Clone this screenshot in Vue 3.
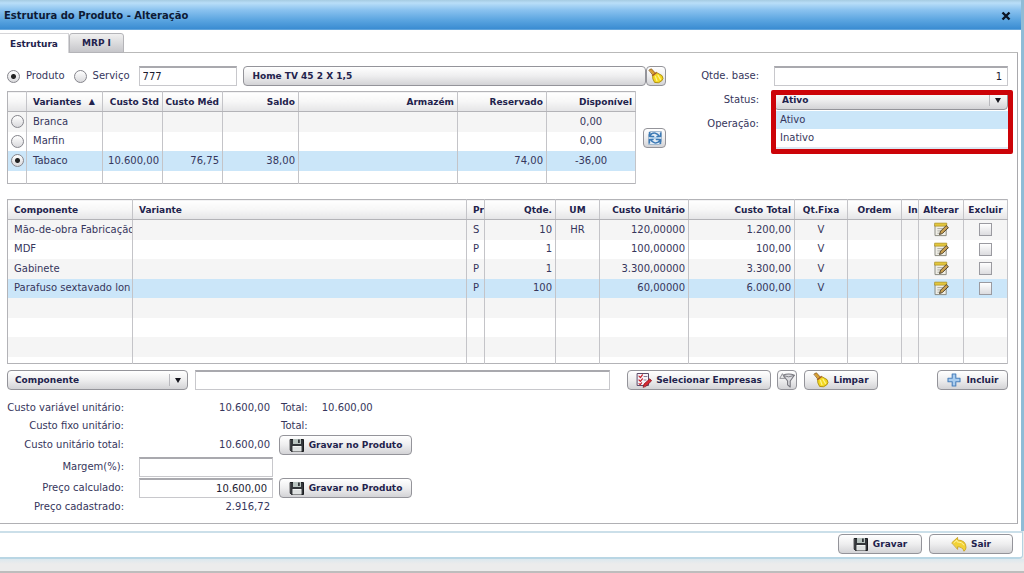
<script setup>
import { ref, h } from 'vue'

const kind = ref('produto')
const code = ref('777')
const baseQty = ref('1')
const status = ref('Ativo')
const variant = ref('Tabaco')
const search = ref('')
const margin = ref('')
const price = ref('10.600,00')

const variants = [
  { name: 'Branca', std: '', med: '', saldo: '', res: '', disp: '0,00' },
  { name: 'Marfin', std: '', med: '', saldo: '', res: '', disp: '0,00' },
  { name: 'Tabaco', std: '10.600,00', med: '76,75', saldo: '38,00', res: '74,00', disp: '-36,00' },
]
const components = [
  { name: 'Mão-de-obra Fabricação', p: 'S', qty: '10', um: 'HR', unit: '120,00000', total: '1.200,00' },
  { name: 'MDF', p: 'P', qty: '1', um: '', unit: '100,00000', total: '100,00' },
  { name: 'Gabinete', p: 'P', qty: '1', um: '', unit: '3.300,00000', total: '3.300,00' },
  { name: 'Parafuso sextavado lon', p: 'P', qty: '100', um: '', unit: '60,00000', total: '6.000,00', selected: true },
]

const svg = (kids) => h('svg', { viewBox: '0 0 16 16', width: 16, height: 16, 'aria-hidden': 'true' },
  kids.map(([d, fill, stroke, w]) => h('path', { d, fill: fill || 'none', stroke: stroke || 'none', 'stroke-width': w || 1, 'stroke-linejoin': 'round', 'stroke-linecap': 'round' })))

const Broom = () => svg([
  ['M1.2 2 3.4 .8 7.6 5.4 5.4 7.2Z', '#d9a030', '#8a5a18', 0.8],
  ['M4.6 7.2 8.4 4.4 14 7.6Q16.2 10.6 13.6 13 10.6 15.8 6.6 14.4Q4 11 4.6 7.2Z', '#f4d820', '#a98a0c', 0.9],
  ['M7.4 8.4 9 12.8M10 7.2 12.4 11.4', null, '#fff48a', 1.2],
  ['M4.8 7.4 8.4 4.8', null, '#a8552d', 1.2],
])
const Floppy = () => svg([
  ['M1.5 2.5H14.5V14.5H2.5L1.5 13.5Z', '#33363a', '#1b1d20', 1],
  ['M4 2H12V7H4Z', '#b9c4c0'],
  ['M9 2.5H10.8V6H9Z', '#33363a'],
  ['M3.5 9H12.5V14.5H3.5Z', '#f4f6f5'],
  ['M4.5 11H11.5M4.5 13H11.5', null, '#bcc2c2', 0.8],
])
const Undo = () => svg([
  ['M1 6.6 6.6 1.4V4Q15 4.2 15 11.4 15 13.6 13 15.2 11.6 10.8 6.6 10.8V13Z', '#f2d235', '#c9a423', 0.9],
  ['M3 6.6 6 4V5.8Q11 5.8 13 9', null, '#fff2a0', 1],
])
const Plus = () => svg([
  ['M6.2 2H9.8V6.2H14V9.8H9.8V14H6.2V9.8H2V6.2H6.2Z', '#a9cdf0', '#4a80bc', 1.1],
])
const Funnel = () => svg([
  ['M4 3.2Q9.6 .8 15.4 3.2L11.2 9V15L8.6 12.8V9Z', '#dcdce0', '#77777e', 1.1],
  ['M4.2 3.6Q9.6 6.2 15 3.6', null, '#77777e', 0.9],
  ['M3.2 2 .8 6.4H5.4Z', '#eeeeee', '#88888e', 0.9],
])
const Check = () => svg([
  ['M1.5 1.5H12.5V13.5H1.5Z', '#f6f3f8', '#5a4a68', 1],
  ['M3 4.2 4.4 5.6 6.4 2.8M3 8 4.4 9.4 6.4 6.8M3 11.6 4.2 12.6 5.6 10.8', null, '#c8202c', 1.2],
  ['M8 4.5H11M8 8H10', null, '#8b7d96', 1],
  ['M7.2 15 8 12 13.8 6.8 15.6 8.8 10 14.2Z', '#d52a34', '#8e1620', 0.8],
])
const Refresh = () => svg([
  ['M3.5 1.5H14.5V11.5H12.5V14.5H1.5V4.5H3.5Z', '#e6eef6', '#9db4cc', 0.9],
  ['M2.5 2.4V6.4H6.6M3 6Q4.6 2.6 8.4 3.2 11 3.8 12.4 6.4M10 6.6H13.6V3', null, '#3d7ab5', 1.5],
  ['M13.5 13.6V9.6H9.4M13 10Q11.4 13.4 7.6 12.8 5 12.2 3.6 9.6M6 9.4H2.4V13', null, '#3d7ab5', 1.5],
  ['M5 8H11', null, '#7fb2de', 1.2],
])
const Note = () => svg([
  ['M1.5 2.5H13V14.5H1.5Z', '#efeee6', '#85857c', 1],
  ['M1 1.2H13.6V4.4H1Z', '#e2c63e', '#a98d1c', 0.7],
  ['M4 7H9M4 9.5H7M4 12H6', null, '#a4a49e', 0.9],
  ['M6 13 7 9.8 13 3.8 15.4 6 9.2 12Z', '#c9a050', '#4c3f28', 1],
])
</script>

<template>
  <main class="page">
    <section class="window">
      <header class="title">
        <h1>Estrutura do Produto - Alteração</h1>
        <button class="close" type="button" aria-label="Fechar">
          <svg viewBox="0 0 10 10" width="10" height="10" aria-hidden="true"><path d="M1.5 1.5 8.5 8.5M8.5 1.5 1.5 8.5" stroke="#0b1524" stroke-width="2.4" /></svg>
        </button>
      </header>
      <nav class="tabs" role="tablist">
        <button class="tab active" type="button" role="tab" aria-selected="true">Estrutura</button>
        <button class="tab" type="button" role="tab" aria-selected="false">MRP I</button>
      </nav>

      <div class="panel">
        <div class="top">
          <div>
            <div class="product">
              <label class="radio"><input v-model="kind" type="radio" name="kind" value="produto" />Produto</label>
              <label class="radio"><input v-model="kind" type="radio" name="kind" value="servico" />Serviço</label>
              <input v-model="code" class="field code" type="text" aria-label="Código" />
              <button class="btn name" type="button">Home TV 45 2 X 1,5</button>
              <button class="btn square" type="button" aria-label="Limpar produto"><Broom /></button>
            </div>
            <div class="variants">
              <table class="grid">
                <colgroup><col class="w19" /><col class="w76" /><col class="w60" /><col class="w60" /><col class="w76" /><col /><col class="w89" /><col class="w89" /></colgroup>
                <thead>
                  <tr><th></th><th>Variantes <span class="sort">▲</span></th><th class="r">Custo Std</th><th class="r">Custo Méd</th><th class="r">Saldo</th><th class="r">Armazém</th><th class="r">Reservado</th><th class="r">Disponível</th></tr>
                </thead>
                <tbody>
                  <tr v-for="v in variants" :key="v.name" :class="{ selected: variant === v.name }">
                    <td class="tick"><input v-model="variant" type="radio" name="variant" :value="v.name" :aria-label="v.name" /></td>
                    <td>{{ v.name }}</td><td class="r">{{ v.std }}</td><td class="r">{{ v.med }}</td><td class="r">{{ v.saldo }}</td><td></td><td class="r">{{ v.res }}</td><td class="c">{{ v.disp }}</td>
                  </tr>
                  <tr class="rest"><td v-for="n in 8" :key="n"></td></tr>
                </tbody>
              </table>
              <button class="btn square" type="button" aria-label="Atualizar"><Refresh /></button>
            </div>
          </div>

          <div class="settings">
            <label for="base">Qtde. base:</label>
            <input id="base" v-model="baseQty" class="field r" type="text" />
            <label for="status">Status:</label>
            <div class="combo">
              <div class="drop">
                <select id="status" v-model="status"><option>Ativo</option><option>Inativo</option></select>
              </div>
              <ul class="menu" role="listbox" aria-label="Status">
                <li role="option" aria-selected="true">Ativo</li>
                <li role="option" aria-selected="false">Inativo</li>
              </ul>
              <div class="highlight"></div>
            </div>
            <span class="label">Operação:</span>
          </div>
        </div>

        <table class="grid parts">
          <colgroup><col class="w125" /><col /><col class="w18" /><col class="w71" /><col class="w44" /><col class="w89" /><col class="w106" /><col class="w53" /><col class="w54" /><col class="w17" /><col class="w45" /><col class="w44" /></colgroup>
          <thead>
            <tr><th>Componente</th><th>Variante</th><th>Pr</th><th class="r">Qtde.</th><th class="c">UM</th><th class="r">Custo Unitário</th><th class="r">Custo Total</th><th class="c">Qt.Fixa</th><th class="c">Ordem</th><th>In</th><th class="tick">Alterar</th><th class="tick">Excluir</th></tr>
          </thead>
          <tbody>
            <tr v-for="c in components" :key="c.name" :class="{ selected: c.selected }">
              <td>{{ c.name }}</td><td></td><td>{{ c.p }}</td><td class="r">{{ c.qty }}</td><td class="c">{{ c.um }}</td><td class="r">{{ c.unit }}</td><td class="r">{{ c.total }}</td><td class="c">V</td><td></td><td></td>
              <td class="tick"><button class="icon" type="button" :aria-label="'Alterar ' + c.name"><Note /></button></td>
              <td class="tick"><input type="checkbox" :aria-label="'Excluir ' + c.name" /></td>
            </tr>
            <tr v-for="n in 3" :key="n"><td v-for="m in 12" :key="m"></td></tr>
            <tr class="rest"><td v-for="m in 12" :key="m"></td></tr>
          </tbody>
        </table>

        <div class="tools">
          <div class="drop kind"><select aria-label="Tipo"><option>Componente</option></select></div>
          <input v-model="search" class="field search" type="text" aria-label="Pesquisar" />
          <button class="btn companies" type="button"><Check />Selecionar Empresas</button>
          <button class="btn square" type="button" aria-label="Filtrar"><Funnel /></button>
          <button class="btn clear" type="button"><Broom />Limpar</button>
          <button class="btn add" type="button"><Plus />Incluir</button>
        </div>

        <div class="totals">
          <span class="label">Custo variável unitário:</span><span class="value">10.600,00</span><span class="extra">Total:<span>10.600,00</span></span>
          <span class="label">Custo fixo unitário:</span><span></span><span class="extra">Total:</span>
          <span class="label">Custo unitário total:</span><span class="value">10.600,00</span><button class="btn save" type="button"><Floppy />Gravar no Produto</button>
          <label for="margin">Margem(%):</label><input id="margin" v-model="margin" class="field r" type="text" /><span></span>
          <label for="price">Preço calculado:</label><input id="price" v-model="price" class="field r" type="text" /><button class="btn save" type="button"><Floppy />Gravar no Produto</button>
          <span class="label">Preço cadastrado:</span><span class="value">2.916,72</span><span></span>
        </div>
      </div>
    </section>
    <footer class="actions">
      <button class="btn" type="button"><Floppy />Gravar</button>
      <button class="btn" type="button"><Undo />Sair</button>
    </footer>
    <div class="base"></div>
  </main>
</template>

<style>
body { margin: 0; background: #ececec; }
</style>

<style scoped>
.page, .page * { box-sizing: border-box; }
.page {
  display: flex; flex-direction: column; min-height: 100vh;
  font: 10px/14px "DejaVu Sans", Verdana, sans-serif; color: #36365c; background: #ececec;
}
button, input, select { font: inherit; color: inherit; margin: 0; }
.window { background: #fff; border-right: 3px solid #8fbcd6; padding-bottom: 7px; }
.title {
  display: flex; align-items: center; justify-content: space-between;
  height: 30px; padding: 2px 10px 0 4px;
  background: linear-gradient(#a5cbe2 0, #b9def8 3px, #8ac2ef 10px, #5ba5e0 20px, #3a8cd2 29px, #8abce3 30px);
}
h1 { margin: 0; font-size: 10px; font-weight: bold; color: #0d1a35; }
.close { display: flex; padding: 0; border: 0; background: none; }
.tabs { display: flex; height: 23px; padding-top: 3px; border-bottom: 1px solid #b9b9b9; margin-right: 3px; }
.tab {
  height: 20px; padding: 0 12px; border: 1px solid #b4b4b8; border-radius: 3px 3px 0 0;
  background: linear-gradient(#f0f0f0, #c6c6ca); font-size: 9px; font-weight: bold; color: #22224c;
}
.tab.active { width: 69px; padding: 0; border-left: 0; border-bottom: 0; border-radius: 0; background: #fff; border-color: #d5d5d8; }
.panel { padding: 13px 9px 7px 7px; margin-right: 3px; border-right: 1px solid #a9a9ad; border-bottom: 1px solid #b0b0b4; }

.top { display: grid; grid-template-columns: minmax(0, 1fr) 342px; }
.product { display: flex; align-items: center; height: 20px; margin-bottom: 5px; }
.radio { display: flex; align-items: center; gap: 6px; margin-right: 9px; }
input[type="radio"] {
  appearance: none; flex: none; width: 13px; height: 13px; border: 1px solid #85858c; border-radius: 50%;
  background: linear-gradient(#fff, #d9d9dc);
}
input[type="radio"]:checked { background: radial-gradient(circle, #222 0 2px, transparent 3px), linear-gradient(#fff, #d9d9dc); }
.field { height: 20px; min-width: 0; padding: 0 5px; border: 1px solid #c8c8cc; border-top: 2px solid #a9a9ae; background: #fff; color: #1c1c30; border-radius: 0; }
.r { text-align: right; }
.c { text-align: center; }
.code { width: 98px; padding: 0 3px; margin-right: 6px; }
.btn {
  display: flex; align-items: center; justify-content: center; gap: 4px; height: 20px; padding: 0 8px;
  border: 1px solid #94949a; border-radius: 4px; background: linear-gradient(#fff, #eeeeef 50%, #d3d3d6);
  font-size: 9px; font-weight: bold; white-space: nowrap; color: #22224c;
}
.btn svg { flex: none; }
.btn.name { flex: 1; justify-content: flex-start; padding: 0 9px; }
.btn.square { flex: none; width: 20px; padding: 0; }
.variants { display: flex; align-items: center; gap: 7px; }
.variants .btn.square { width: 23px; }

.grid { table-layout: fixed; width: 100%; border-collapse: collapse; border: 1px solid #b3b3b7; background: #fff; }
.variants .grid { flex: 1; width: auto; min-width: 0; }
.grid th, .grid td { padding: 0 1px 0 6px; border-right: 1px solid #c4c4c8; overflow: hidden; white-space: nowrap; text-align: left; line-height: 14px; }
.grid th { height: 20px; font-size: 9px; font-weight: bold; color: #22224c; background: linear-gradient(#fff, #f6f6f6 50%, #e4e4e6); border-bottom: 1px solid #b3b3b7; }
.grid th.r, .grid td.r { text-align: right; padding: 0 3px 0 0; }
.grid th.c, .grid td.c { text-align: center; padding: 0 3px; }
.grid th.tick, .grid td.tick { text-align: center; padding: 0; }
.grid tbody tr { height: 20px; }
.grid tbody tr:nth-child(even) { height: 19px; }
.grid tbody tr:nth-child(odd) { background: #f5f5f5; }
.grid tbody tr.selected { background: #cbe6f9; }
.grid tbody tr.rest { height: 13px; background: #fff; }
.grid.parts tbody tr.rest { height: 7px; }
.tick input, .tick .icon { display: block; margin: 0 auto; }
.sort { float: right; margin-right: 6px; font-size: 8px; }
.icon { width: 15px; height: 15px; padding: 0; border: 0; background: none; }
.icon svg { display: block; width: 15px; height: 15px; }
input[type="checkbox"] { appearance: none; width: 13px; height: 13px; border: 1px solid #9a9aa0; background: linear-gradient(#fff, #dcdcdf); }
.w17 { width: 17px; } .w18 { width: 18px; } .w19 { width: 19px; } .w44 { width: 44px; } .w45 { width: 45px; }
.w53 { width: 53px; } .w54 { width: 54px; } .w60 { width: 60px; } .w71 { width: 71px; } .w76 { width: 76px; }
.w89 { width: 89px; } .w106 { width: 106px; } .w125 { width: 125px; }
.parts { margin-top: 15px; }

.settings { display: grid; grid-template-columns: minmax(0, 1fr) 234px; grid-template-rows: 20px 20px 20px; row-gap: 4px; column-gap: 15px; align-items: center; align-content: start; }
.settings label, .label, .totals label { text-align: right; white-space: nowrap; }
.combo { position: relative; }
.drop {
  position: relative; height: 20px; border: 1px solid #94949a; border-radius: 4px;
  background: linear-gradient(#fff, #eeeeef 50%, #d3d3d6);
}
.drop select { appearance: none; width: 100%; height: 100%; padding: 0 24px 0 7px; border: 0; background: none; font-size: 9px; font-weight: bold; color: #22224c; }
.drop::before { content: ""; position: absolute; right: 17px; top: 3px; bottom: 3px; border-left: 1px solid #b9b9be; }
.drop::after { content: ""; position: absolute; right: 6px; top: 7px; border: 3px solid transparent; border-top: 5px solid #15151d; border-bottom: 0; }
.menu { position: absolute; z-index: 1; top: 21px; left: 0; right: 0; margin: 0; padding: 0 0 2px; list-style: none; background: #dce7f2; }
.menu li { height: 18px; padding: 0 6px; line-height: 18px; background: #fff; }
.menu li[aria-selected="true"] { background: #cbe6f9; }
.highlight { position: absolute; z-index: 2; top: 0; left: -3px; right: -5px; height: 64px; border: 5px solid #cc0308; border-radius: 2px; pointer-events: none; }

.tools { display: flex; align-items: center; margin: 6px 0 9px; }
.kind { width: 181px; margin-right: 7px; }
.search { flex: 1; }
.companies { width: 144px; margin: 0 6px 0 17px; }
.clear { width: 74px; margin: 0 59px 0 7px; }
.add { width: 71px; }

.totals { display: grid; grid-template-columns: 117px 149px 139px; grid-template-rows: 18px 17px 22px 21px 21px 18px; justify-content: start; align-items: center; }
.totals > input { margin-left: 15px; }
.totals .value { text-align: right; padding-right: 3px; }
.totals .btn, .extra { margin-left: 6px; }
.extra { padding-left: 2px; }
.extra span { margin-left: 14px; }

.actions { display: flex; justify-content: flex-end; align-items: center; gap: 7px; height: 28px; margin-right: 1px; padding: 0 9px 2px 0; background: #fff; border: 1px solid #b5d2e1; border-left: 0; border-top: 2px solid #cbdfe9; border-bottom: 2px solid #b9d6e4; border-radius: 0 0 4px 0; }
.actions .btn { width: 84px; }
.base { flex: 1; border-bottom: 2px solid #bdbdbd; background: linear-gradient(#dce8ee, #ececec 5px); }
</style>
